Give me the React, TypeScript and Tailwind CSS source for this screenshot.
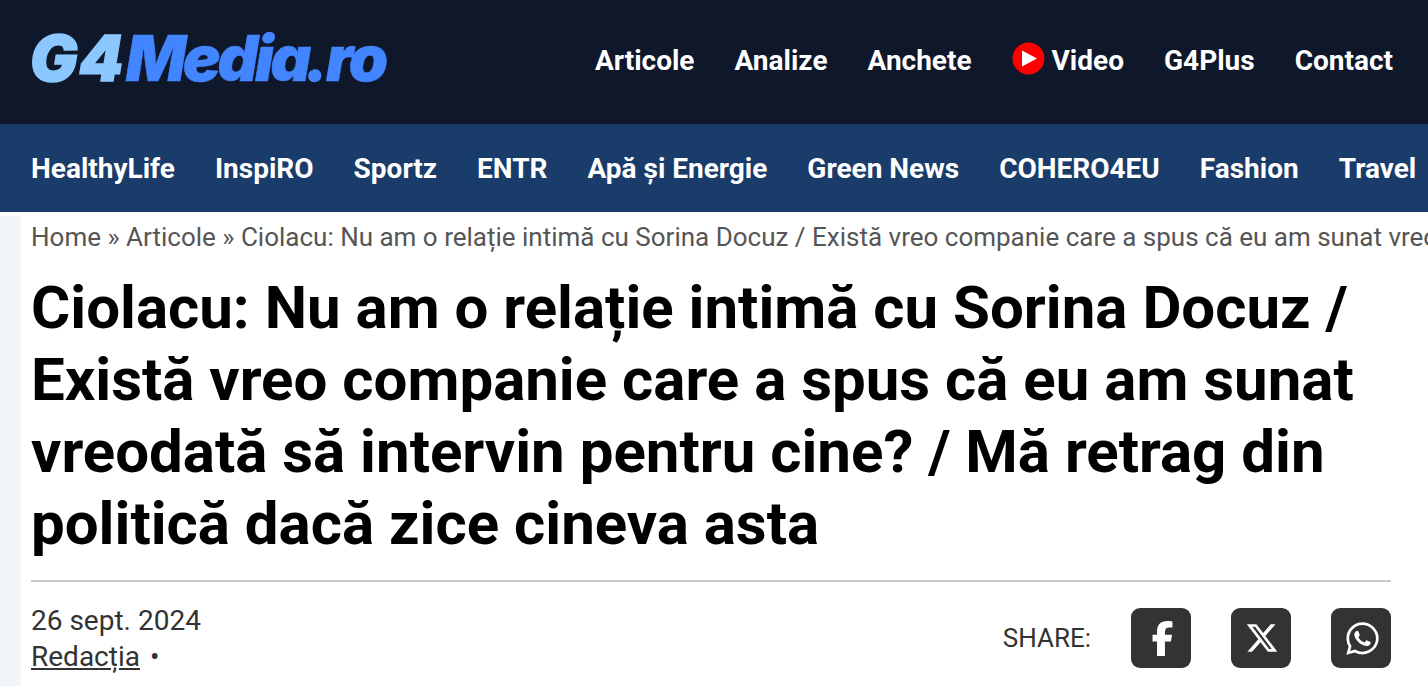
import { FaFacebookF, FaXTwitter, FaWhatsapp } from "react-icons/fa6";

const top = ["Articole", "Analize", "Anchete"];
const sub = ["HealthyLife", "InspiRO", "Sportz", "ENTR", "Apă și Energie", "Green News", "COHERO4EU", "Fashion", "Travel"];

export default function App() {
  return (
    <div className="h-[686px] w-[1428px] overflow-hidden bg-white font-['Roboto',sans-serif]">
      <header className="flex h-[124px] items-center justify-between bg-[#0f172a] pl-[30px] pr-[35px]">
        <div className="flex -translate-y-[4px] text-[63px] font-black italic leading-none font-['Inter',sans-serif]">
          <span className="tracking-[1.5px] text-[#8cc8ff] [-webkit-text-stroke:1.5px_#8cc8ff]">G4</span>
          <span className="ml-[1px] tracking-[-3.2px] text-[#4285ff] [-webkit-text-stroke:0.5px_#4285ff]">Media</span>
          <span className="ml-[-3px] tracking-[-2.5px] text-[#4285ff] [-webkit-text-stroke:0.5px_#4285ff]">.ro</span>
        </div>
        <nav className="flex items-center gap-[40px] text-[28px] font-bold text-white -translate-y-[1px]">
          {top.map((t) => (
            <a key={t}>{t}</a>
          ))}
          <a className="flex items-center gap-[7px]">
            <svg width="33" height="33" viewBox="0 0 33 33" className="-translate-y-[3px]">
              <circle cx="16.5" cy="16.5" r="16" fill="#ff0000" />
              <path d="M10 8.5 L25 16.5 L10 24.5 Z" fill="#fff" />
            </svg>
            Video
          </a>
          <a>G4Plus</a>
          <a>Contact</a>
        </nav>
      </header>
      <nav className="flex h-[88px] items-center gap-[40px] overflow-hidden whitespace-nowrap bg-[#1a3c6a] pl-[31px] pt-[2px] text-[28px] font-bold text-white">
        {sub.map((t) => (
          <a key={t}>{t}</a>
        ))}
      </nav>
      <div className="flex pt-[4px]">
        <div className="h-[470px] w-[21px] shrink-0 bg-[#f1f6fa]" />
        <main className="min-w-0 flex-1 pl-[10px] pr-[37px]">
          <div className="h-[38px] pt-[2px] whitespace-nowrap text-[26px] leading-[38px] text-[#555555]">
            Home » Articole » Ciolacu: Nu am o relație intimă cu Sorina Docuz / Există vreo companie care a spus că eu am sunat vreodată să intervin pentru cine? / Mă retrag din politică dacă zice cineva asta
          </div>
          <h1 className="mt-[18px] text-[60px] font-bold leading-[72px] text-black">
            Ciolacu: Nu am o relație intimă cu Sorina Docuz / Există vreo companie care a spus că eu am sunat vreodată să intervin pentru cine? / Mă retrag din politică dacă zice cineva asta
          </h1>
          <hr className="mt-[20px] border-t-2 border-[#c8c8c8]" />
          <div className="mt-[21px] flex items-start justify-between">
            <div className="text-[28px] leading-[36px] text-[#333333]">
              <div>26 sept. 2024</div>
              <div>
                <span className="underline">Redacția</span>
                <span className="ml-[10px]">•</span>
              </div>
            </div>
            <div className="flex items-center gap-[40px] pt-[5px]">
              <span className="text-[26px] text-[#333333]">SHARE:</span>
              <span className="flex h-[60px] w-[60px] items-center justify-center rounded-[9px] bg-[#333333] pl-[2px] text-[35px] text-white">
                <FaFacebookF />
              </span>
              <span className="flex h-[60px] w-[60px] items-center justify-center rounded-[9px] bg-[#333333] pl-[2px] text-[34px] text-white">
                <FaXTwitter />
              </span>
              <span className="flex h-[60px] w-[60px] items-center justify-center rounded-[9px] bg-[#333333] pl-[2px] text-[37px] text-white">
                <FaWhatsapp />
              </span>
            </div>
          </div>
        </main>
      </div>
    </div>
  );
}
